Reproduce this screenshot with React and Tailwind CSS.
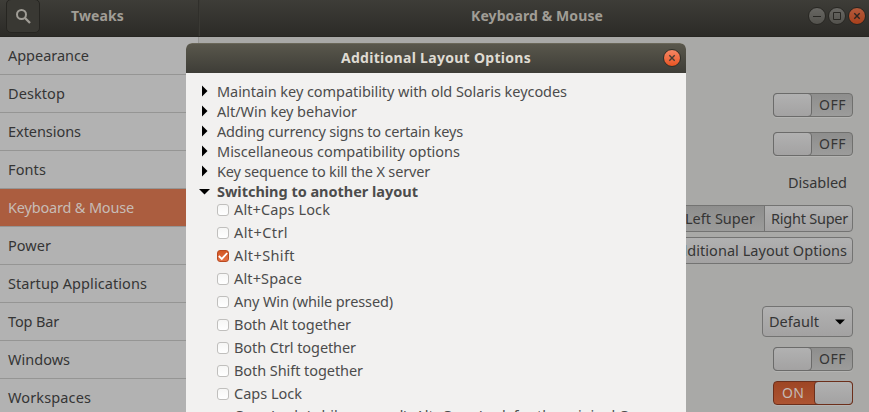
import React, { useLayoutEffect, useRef } from "react";

// Text run whose letter spacing is adjusted to occupy a given width.
function Label({ w, children, className = "" }) {
  const ref = useRef(null);
  useLayoutEffect(() => {
    const el = ref.current;
    const fit = () => {
      el.style.letterSpacing = "0px";
      const natural = el.getBoundingClientRect().width;
      el.style.letterSpacing = (w - natural) / children.length + "px";
    };
    fit();
    document.fonts.ready.then(fit);
  }, [w, children]);
  return (
    <span ref={ref} className={"inline-block shrink-0 whitespace-pre " + className}>
      {children}
    </span>
  );
}

const sections = [
  ["Appearance", 81], ["Desktop", 57], ["Extensions", 73], ["Fonts", 38],
  ["Keyboard & Mouse", 126], ["Power", 43], ["Startup Applications", 139],
  ["Top Bar", 51], ["Windows", 62], ["Workspaces", 83],
];

const groups = [
  ["Maintain key compatibility with old Solaris keycodes", 350],
  ["Alt/Win key behavior", 140],
  ["Adding currency signs to certain keys", 246],
  ["Miscellaneous compatibility options", 243],
  ["Key sequence to kill the X server", 213],
];

const options = [
  ["Alt+Caps Lock", 96], ["Alt+Ctrl", 54], ["Alt+Shift", 61], ["Alt+Space", 68],
  ["Any Win (while pressed)", 159], ["Both Alt together", 117],
  ["Both Ctrl together", 122], ["Both Shift together", 129], ["Caps Lock", 68],
];

function Switch({ on }) {
  return on ? (
    <div className="flex h-6 w-20 items-center justify-between rounded-[4px] border border-[#6c2f1b] bg-gradient-to-b from-[#9e4624] to-[#ad5432] pl-[8px] shadow-[0_1px_0_#b4b4b2]">
      <Label w={22} className="text-[14px] text-[#c5bbb6]">ON</Label>
      <div className="-my-px -mr-px h-6 w-[39px] rounded-[4px] border border-[#6c2f1b] bg-gradient-to-b from-[#b1b1b1] to-[#a3a2a2]" />
    </div>
  ) : (
    <div className="flex h-6 w-20 items-center justify-between rounded-[4px] border border-[#70706e] bg-gradient-to-b from-[#8e8e8d] to-[#9c9c9b] pr-[6px] shadow-[0_1px_0_#b4b4b2]">
      <div className="-my-px -ml-px h-6 w-[39px] rounded-[4px] border border-[#6b6b6a] bg-gradient-to-b from-[#b1b1b1] to-[#a3a2a2]" />
      <Label w={27} className="text-[14px]">OFF</Label>
    </div>
  );
}

function WindowButton({ kind, bright }) {
  const fill =
    kind === "close"
      ? bright
        ? "border-[#303029] bg-gradient-to-b from-[#f58663] to-[#e85420] text-[#433c33]"
        : "border-[#262521] bg-gradient-to-b from-[#b45a3b] to-[#a8401b] text-[#2b2520]"
      : "border-[#282723] bg-gradient-to-b from-[#686763] to-[#53524d] text-[#282723]";
  return (
    <div className={"flex size-[18px] items-center justify-center rounded-full border " + fill}>
      <svg width="16" height="16" viewBox="0 0 16 16" className="shrink-0" fill="none" stroke="currentColor" strokeWidth="1">
        {kind === "min" && <path d="M4 8.5h8" />}
        {kind === "max" && <path d="M4.5 4.5h7v7h-7z" />}
        {kind === "close" && <path d="M5.3 5.3l5.4 5.4M10.7 5.3l-5.4 5.4" strokeWidth="1.4" />}
      </svg>
    </div>
  );
}

function Check({ on }) {
  return (
    <div className={"mr-[5px] flex size-3 shrink-0 items-center justify-center rounded-[3px] border " +
      (on ? "border-[#b94a20] bg-gradient-to-b from-[#d25622] to-[#e57145]" : "border-[#c0bfbd] bg-gradient-to-b from-[#f6f6f5] to-white")}>
      {on && (
        <svg width="10" height="10" viewBox="0 0 10 10" className="shrink-0" fill="none" stroke="white" strokeWidth="1.8">
          <path d="M.8 5l3 2.9L9.2 2" />
        </svg>
      )}
    </div>
  );
}

function Dialog() {
  return (
    <div className="absolute left-[186px] top-[43px] h-[369px] w-[500px] overflow-hidden rounded-t-[6px] bg-[#f2f1f0] text-[#4c4c4c]">
      <div className="flex h-[30px] items-center border-t border-[#6a6759] bg-gradient-to-b from-[#59574c] to-[#3e3d37] pl-[155px] pr-[5px]">
        <Label w={190} className="pb-[2px] text-[14px] font-bold text-[#dfdbd2]">Additional Layout Options</Label>
        <div className="-mt-px ml-auto"><WindowButton kind="close" bright /></div>
      </div>
      <div className="pl-[15px] pt-[9px]">
        {groups.map(([t, w]) => (
          <div key={t} className="flex h-5 items-center">
            <svg width="16" height="12" className="-mt-[2px] shrink-0"><path d="M1 .5v11l5.5-5.5z" fill="#000" /></svg>
            <Label w={w} className="pb-[2px]">{t}</Label>
          </div>
        ))}
        <div className="flex h-5 items-center">
          <svg width="16" height="12" className="-ml-[2px] mr-[2px] shrink-0"><path d="M0 3h11L5.500 8.500z" fill="#000" /></svg>
          <Label w={201} className="pb-[2px] font-bold">Switching to another layout</Label>
        </div>
        <div className="-mt-[4px] pl-4">
          {options.map(([t, w]) => (
            <div key={t} className="flex h-[23px] items-center">
              <Check on={t === "Alt+Shift"} />
              <Label w={w} className="pb-[2px]">{t}</Label>
            </div>
          ))}
          <div className="flex items-start">
            <div className="mt-4"><Check /></div>
            <Label w={418}>Caps Lock (while pressed), Alt+Caps Lock for the original Caps</Label>
          </div>
        </div>
      </div>
    </div>
  );
}

export default function App() {
  return (
    <div className="relative flex h-[412px] w-[869px] flex-col overflow-hidden bg-[#a9a9a7] font-['Noto_Sans',sans-serif] text-[14.5px] leading-[20px] text-[#353535]">
      <header className="flex h-[37px] shrink-0 border-b border-[#272622] bg-gradient-to-b from-[#3e3d38] to-[#2c2b27] text-[14px] font-bold text-[#a09d96]">
        <div className="flex w-[199px] shrink-0 items-start border-r border-[#302f2b] pl-[6px]">
          <div className="-mt-px flex h-[34px] w-[34px] items-center justify-center rounded-[5px] border border-[#262521] bg-[#393833]">
            <svg width="16" height="16" viewBox="0 0 16 16" fill="none" stroke="#a09d96" strokeWidth="2">
              <circle cx="6.500" cy="6.500" r="4.500" /><path d="M10 10l5 5" strokeWidth="2.3" />
            </svg>
          </div>
          <Label w={53} className="ml-[31px] mt-[6px]">Tweaks</Label>
        </div>
        <div className="flex flex-1 items-start border-l border-[#3a3934] pl-[271px] pr-[3px]">
          <Label w={132} className="mt-[6px]">{"Keyboard & Mouse"}</Label>
          <div className="ml-auto mt-[7px] flex gap-[2px]">
            <WindowButton kind="min" /><WindowButton kind="max" /><WindowButton kind="close" />
          </div>
        </div>
      </header>
      <div className="flex min-h-0 flex-1">
        <nav className="w-[199px] shrink-0 overflow-hidden border-r border-[#989896] bg-[#b2b2b2]">
          {sections.map(([t, w]) => (
            <div key={t} className={"flex h-[38px] items-center border-b border-[#959594] pl-2 " + (t === "Keyboard & Mouse" ? "bg-[#ab5d3f] text-[#c7bcb6]" : "")}>
              <Label w={w} className="pb-[2px]">{t}</Label>
            </div>
          ))}
        </nav>
        <main className="flex flex-1 flex-col items-end pr-4 pt-14">
          <Switch />
          <div className="mt-[15px]"><Switch /></div>
          <Label w={59} className="mr-[6px] mt-[16px]">Disabled</Label>
          <div className="mt-[13px] flex h-[27px] w-[240px] rounded-[4px] border border-[#737372] bg-gradient-to-b from-[#b1b1b1] to-[#a3a2a2]">
            <div className="flex flex-1 items-center justify-end border-r border-[#737372] bg-gradient-to-b from-[#8e8e8d] to-[#9c9c9b] pr-[9px]"><Label w={70} className="pb-[2px]">Left Super</Label></div>
            <div className="flex w-[87px] items-center pl-[6px]"><Label w={77} className="pb-[2px]">Right Super</Label></div>
          </div>
          <div className="mt-[5px] flex h-[27px] w-[240px] items-center justify-end rounded-[4px] border border-[#737372] bg-gradient-to-b from-[#b1b1b1] to-[#a3a2a2] pr-[5px]"><Label w={178} className="pb-[2px]">Additional Layout Options</Label></div>
          <div className="mt-[42px] flex h-[31px] w-[91px] items-center justify-between rounded-[4px] border border-[#737372] bg-gradient-to-b from-[#b1b1b1] to-[#a3a2a2] pl-[6px] pr-[7px]">
            <Label w={50} className="pb-[2px]">Default</Label>
            <svg width="10" height="6"><path d="M0 .5h10l-5 5z" fill="#000" /></svg>
          </div>
          <div className="mt-[10px]"><Switch /></div>
          <div className="mt-[10px]"><Switch on /></div>
        </main>
      </div>
      <Dialog />
    </div>
  );
}
